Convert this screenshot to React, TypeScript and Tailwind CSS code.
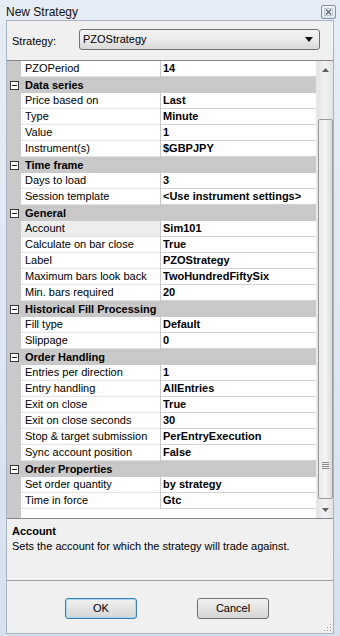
import React from "react";

type Row = { name: string; value?: string; cat?: boolean; sel?: boolean };

const rows: Row[] = [
  { name: "PZOPeriod", value: "14" },
  { name: "Data series", cat: true },
  { name: "Price based on", value: "Last" },
  { name: "Type", value: "Minute" },
  { name: "Value", value: "1" },
  { name: "Instrument(s)", value: "$GBPJPY" },
  { name: "Time frame", cat: true },
  { name: "Days to load", value: "3" },
  { name: "Session template", value: "<Use instrument settings>" },
  { name: "General", cat: true },
  { name: "Account", value: "Sim101", sel: true },
  { name: "Calculate on bar close", value: "True" },
  { name: "Label", value: "PZOStrategy" },
  { name: "Maximum bars look back", value: "TwoHundredFiftySix" },
  { name: "Min. bars required", value: "20" },
  { name: "Historical Fill Processing", cat: true },
  { name: "Fill type", value: "Default" },
  { name: "Slippage", value: "0" },
  { name: "Order Handling", cat: true },
  { name: "Entries per direction", value: "1" },
  { name: "Entry handling", value: "AllEntries" },
  { name: "Exit on close", value: "True" },
  { name: "Exit on close seconds", value: "30" },
  { name: "Stop & target submission", value: "PerEntryExecution" },
  { name: "Sync account position", value: "False" },
  { name: "Order Properties", cat: true },
  { name: "Set order quantity", value: "by strategy" },
  { name: "Time in force", value: "Gtc" },
];

function Minus() {
  return (
    <div className="w-[9px] h-[9px] border border-[#3a3a3a] bg-white flex items-center justify-center">
      <div className="w-[5px] h-[1px] bg-[#222]" />
    </div>
  );
}

export default function App() {
  return (
    <div
      className="w-[340px] h-[636px] bg-gradient-to-b from-[#e6edf6] to-[#d6e1ee] flex flex-col text-[11px] text-black overflow-hidden"
      style={{ fontFamily: '"Liberation Sans", Arial, sans-serif' }}
    >
      {/* title bar */}
      <div className="h-[20px] flex items-center pl-[6px] pr-[4px] relative">
        <span className="text-[12px] text-[#111] leading-none mt-[4px]">New Strategy</span>
        <div className="ml-auto mt-[4px] w-[15px] h-[14px] border border-[#8393a9] rounded-[2px] bg-gradient-to-b from-[#f4f7fb] to-[#dde5ef] flex items-center justify-center">
          <svg width="9" height="8" viewBox="0 0 9 8">
            <path d="M2 1.5 L7 6.5 M7 1.5 L2 6.5" stroke="#5a6472" strokeWidth="1.2" />
            <rect x="0.5" y="0.5" width="8" height="7" fill="none" stroke="#a3aebd" strokeWidth="0.6" />
          </svg>
        </div>
      </div>

      {/* client area */}
      <div className="mx-[6px] mb-[2px] flex-1 bg-[#f0f0f0] border border-[#a9b4c2] flex flex-col">
        {/* strategy row */}
        <div className="h-[39px] flex items-start pt-[8px]">
          <span className="ml-[5px] mt-[4px] w-[67px]">Strategy:</span>
          <div className="w-[241px] h-[21px] border border-[#707070] rounded-[3px] bg-gradient-to-b from-[#f2f2f2] via-[#ebebeb] to-[#d8d8d8] flex items-center pl-[3px] pr-[6px]">
            <span>PZOStrategy</span>
            <svg className="ml-auto" width="8" height="5" viewBox="0 0 8 5">
              <path d="M0 0 H8 L4 5 Z" fill="#111" />
            </svg>
          </div>
        </div>

        {/* property grid */}
        <div className="h-[459px] border-y border-[#828790] bg-white flex">
          <div className="flex-1 flex flex-col">
            {rows.map((r, i) =>
              r.cat ? (
                <div key={i} className="h-[16px] bg-[#c9c9c9] flex items-center">
                  <div className="w-[14px] flex justify-center pl-[1px]">
                    <Minus />
                  </div>
                  <span className="pl-[4px] font-bold leading-none">{r.name}</span>
                </div>
              ) : (
                <div key={i} className="h-[16px] flex">
                  <div className="w-[14px] bg-[#c9c9c9]" />
                  <div
                    className={`w-[139px] pl-[4px] flex items-center border-b border-[#e4e4e4] ${
                      r.sel ? "bg-[#ededed]" : "bg-white"
                    }`}
                  >
                    <span className="leading-none whitespace-nowrap">{r.name}</span>
                  </div>
                  <div className="w-[1px] bg-[#c9c9c9]" />
                  <div className="flex-1 pl-[2px] flex items-center border-b border-[#d2d2d2] bg-white">
                    <span className="leading-none font-bold whitespace-nowrap">{r.value}</span>
                  </div>
                </div>
              )
            )}
            <div className="flex-1 flex">
              <div className="w-[14px] bg-[#c9c9c9]" />
              <div className="flex-1 bg-white" />
            </div>
          </div>
          {/* scrollbar */}
          <div className="w-[17px] bg-gradient-to-r from-[#e3e3e3] via-[#f2f2f2] to-[#e3e3e3] flex flex-col items-center border-l border-[#e8e8e8]">
            <div className="h-[17px] w-full flex items-center justify-center">
              <svg width="7" height="4" viewBox="0 0 7 4">
                <path d="M0 4 L3.5 0 L7 4 Z" fill="#606060" />
              </svg>
            </div>
            <div className="h-[41px]" />
            <div className="w-[15px] h-[380px] border border-[#9b9b9b] rounded-[2px] bg-gradient-to-r from-[#e9e9e9] via-[#f6f6f6] to-[#d9d9d9] flex flex-col items-center">
              <div className="flex-1" />
              <div className="flex flex-col gap-[1px] mb-[29px]">
                <div className="w-[7px] h-[1px] bg-[#8a8a8a]" />
                <div className="w-[7px] h-[1px] bg-[#8a8a8a]" />
                <div className="w-[7px] h-[1px] bg-[#8a8a8a]" />
                <div className="w-[7px] h-[1px] bg-[#8a8a8a]" />
              </div>
            </div>
            <div className="flex-1" />
            <div className="h-[17px] w-full flex items-center justify-center">
              <svg width="7" height="4" viewBox="0 0 7 4">
                <path d="M0 0 L7 0 L3.5 4 Z" fill="#606060" />
              </svg>
            </div>
          </div>
        </div>

        {/* description */}
        <div className="h-[62px] border-b border-[#a0a0a0] px-[5px] pt-[6px] flex flex-col">
          <span className="font-bold leading-[13px]">Account</span>
          <span className="leading-[14px] mt-[1px]">Sets the account for which the strategy will trade against.</span>
        </div>

        {/* buttons */}
        <div className="flex-1 relative">
          <div className="flex pt-[17px] pl-[58px]">
            <button className="w-[72px] h-[21px] border border-[#3c7fb1] rounded-[3px] bg-gradient-to-b from-[#f2f2f2] to-[#d5d5d5] shadow-[inset_0_0_0_1px_#a7d7f3] text-[11px]">
              OK
            </button>
            <button className="ml-[60px] w-[72px] h-[21px] border border-[#707070] rounded-[3px] bg-gradient-to-b from-[#f2f2f2] to-[#d5d5d5] text-[11px]">
              Cancel
            </button>
          </div>
          <svg className="absolute right-[1px] bottom-[1px]" width="8" height="8" viewBox="0 0 8 8">
            <rect x="6" y="0" width="1" height="1" fill="#999" />
            <rect x="3" y="3" width="1" height="1" fill="#999" />
            <rect x="6" y="3" width="1" height="1" fill="#999" />
            <rect x="0" y="6" width="1" height="1" fill="#999" />
            <rect x="3" y="6" width="1" height="1" fill="#999" />
            <rect x="6" y="6" width="1" height="1" fill="#999" />
          </svg>
        </div>
      </div>
    </div>
  );
}
